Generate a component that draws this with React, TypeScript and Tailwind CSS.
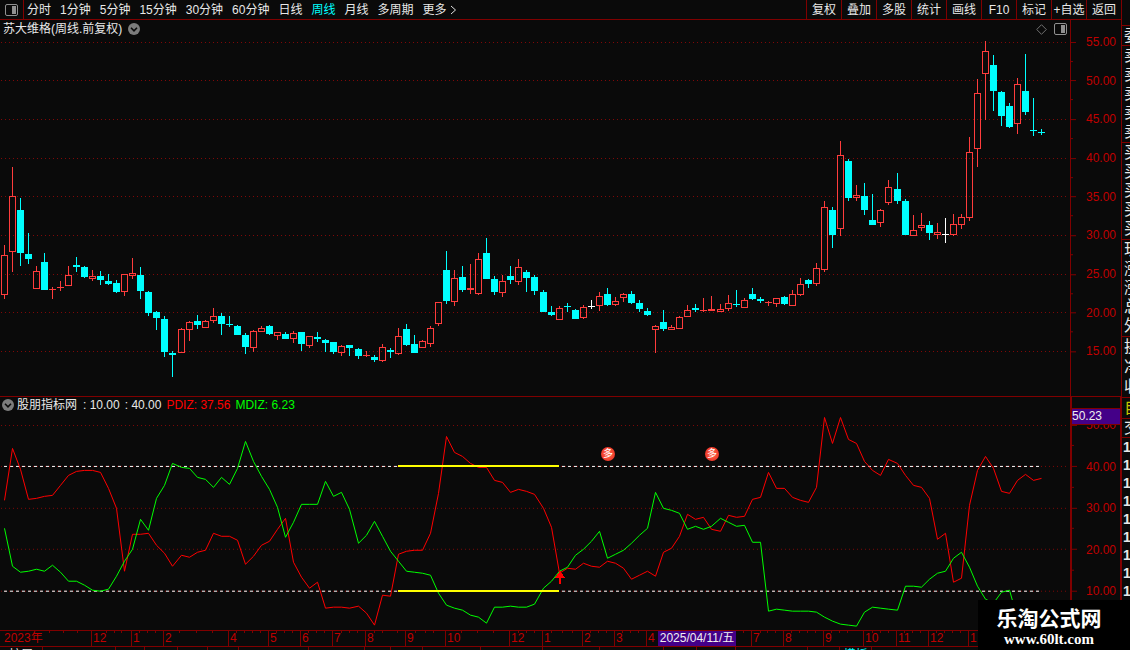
import React from "react";

type Kind = "u" | "d" | "w";
// kind, high, body top, body bottom, low
type Candle = [Kind, number, number, number, number];

const PLOT_W = 1070;
const MAIN_W = 1121;

const periods = [
  "分时", "1分钟", "5分钟", "15分钟", "30分钟", "60分钟", "日线", "周线", "月线", "多周期",
];
const tools = ["复权", "叠加", "多股", "统计", "画线", "F10", "标记", "+自选", "返回"];

const priceLabels = ["55.00", "50.00", "45.00", "40.00", "35.00", "30.00", "25.00", "20.00", "15.00"];
const priceRows = [42, 80, 119, 158, 196, 235, 274, 312, 351];
const indicatorLabels = ["50.00", "40.00", "30.00", "20.00", "10.00"];
const indicatorRows = [425, 466, 508, 549, 591];

const candles: Candle[] = [
  ["u", 245, 255, 295, 299], ["u", 167, 196, 252, 272], ["d", 198, 210, 253, 266], ["d", 233, 254, 259, 264],
  ["u", 266, 271, 289, 289], ["d", 253, 262, 290, 290], ["u", 287, 289, 290, 299], ["u", 281, 287, 288, 291],
  ["u", 266, 275, 286, 286], ["d", 257, 265, 267, 272], ["d", 266, 267, 277, 278], ["u", 270, 276, 279, 281],
  ["d", 271, 276, 280, 285], ["d", 274, 281, 284, 285], ["d", 280, 283, 292, 293], ["u", 274, 274, 292, 296],
  ["u", 258, 273, 276, 279], ["d", 267, 275, 291, 299], ["d", 291, 292, 313, 316], ["d", 311, 312, 318, 330],
  ["d", 316, 319, 352, 357], ["d", 351, 353, 355, 377], ["u", 328, 329, 353, 353], ["u", 321, 322, 330, 341],
  ["d", 315, 321, 325, 329], ["u", 320, 321, 328, 328], ["u", 308, 316, 321, 323], ["d", 313, 316, 324, 335],
  ["d", 316, 324, 325, 327], ["d", 325, 326, 335, 335], ["d", 333, 335, 347, 354], ["u", 330, 331, 348, 352],
  ["u", 326, 328, 332, 332], ["d", 325, 326, 334, 335], ["u", 332, 332, 336, 340], ["d", 332, 334, 339, 339],
  ["u", 331, 333, 339, 343], ["d", 332, 332, 344, 351], ["u", 336, 336, 346, 348], ["d", 332, 337, 339, 342],
  ["d", 339, 340, 343, 352], ["d", 342, 342, 352, 354], ["u", 345, 346, 353, 356], ["d", 345, 345, 348, 356],
  ["d", 348, 349, 356, 359], ["u", 351, 355, 356, 357], ["d", 355, 357, 360, 362], ["u", 344, 347, 361, 362],
  ["d", 348, 350, 352, 358], ["u", 328, 336, 354, 355], ["d", 324, 329, 345, 346], ["d", 335, 344, 353, 353],
  ["u", 340, 341, 348, 348], ["u", 326, 328, 344, 347], ["u", 302, 302, 324, 326], ["d", 251, 270, 301, 304],
  ["u", 270, 278, 302, 306], ["d", 266, 277, 290, 292], ["u", 264, 288, 290, 294], ["u", 253, 259, 294, 295],
  ["d", 238, 253, 279, 279], ["d", 276, 279, 292, 295], ["u", 275, 281, 293, 297], ["d", 266, 276, 280, 284],
  ["u", 259, 267, 282, 285], ["d", 270, 272, 278, 292], ["d", 275, 277, 291, 295], ["d", 290, 292, 312, 312],
  ["d", 306, 312, 315, 316], ["u", 306, 308, 320, 320], ["d", 303, 306, 307, 312], ["d", 309, 310, 319, 319],
  ["u", 305, 307, 318, 319], ["w", 300, 306, 307, 309], ["u", 292, 296, 306, 311], ["d", 288, 294, 305, 306],
  ["u", 297, 301, 305, 306], ["u", 293, 294, 298, 302], ["d", 291, 294, 303, 304], ["d", 300, 303, 309, 312],
  ["d", 308, 311, 315, 316], ["u", 325, 326, 330, 353], ["d", 310, 322, 329, 331], ["u", 325, 327, 330, 330],
  ["u", 316, 317, 329, 329], ["u", 305, 310, 317, 317], ["d", 304, 308, 310, 312], ["u", 298, 310, 311, 312],
  ["u", 296, 309, 311, 311], ["u", 304, 309, 312, 312], ["u", 295, 303, 309, 311], ["d", 290, 304, 305, 307],
  ["u", 298, 300, 308, 308], ["d", 288, 294, 299, 300], ["d", 297, 299, 301, 303], ["u", 301, 302, 303, 306],
  ["u", 298, 298, 304, 307], ["d", 296, 297, 304, 305], ["u", 290, 294, 306, 306], ["u", 278, 284, 295, 296],
  ["d", 279, 280, 284, 288], ["u", 263, 268, 284, 286], ["u", 201, 207, 270, 272], ["d", 207, 210, 235, 248],
  ["u", 141, 155, 229, 236], ["d", 159, 161, 198, 201], ["u", 185, 195, 198, 201], ["d", 183, 196, 210, 215],
  ["d", 194, 220, 225, 225], ["u", 209, 210, 223, 227], ["u", 180, 187, 203, 205], ["d", 173, 189, 201, 204],
  ["d", 199, 201, 235, 235], ["u", 215, 230, 236, 236], ["u", 213, 225, 228, 231], ["d", 221, 225, 233, 240],
  ["u", 223, 232, 235, 239], ["w", 218, 234, 235, 243], ["u", 214, 224, 235, 236], ["u", 214, 217, 225, 229],
  ["u", 137, 152, 218, 221], ["u", 79, 93, 149, 167], ["u", 41, 51, 74, 120], ["d", 55, 65, 91, 111],
  ["d", 91, 92, 116, 126], ["d", 103, 106, 127, 128], ["u", 78, 84, 124, 134], ["d", 54, 91, 112, 115],
  ["d", 98, 130, 131, 136], ["d", 129, 132, 133, 135],
];

const pdiz = [
  500, 448, 469, 499, 498, 496, 495, 485, 475, 471, 470, 470, 472, 488, 508, 571, 534, 534, 533, 545,
  553, 566, 555, 557, 552, 550, 533, 536, 536, 540, 564, 556, 545, 541, 529, 518, 562, 577, 588, 582,
  608, 607, 607, 608, 606, 613, 625, 595, 596, 554, 551, 550, 550, 533, 493, 436, 452, 456, 463, 467,
  467, 480, 482, 492, 489, 491, 494, 508, 527, 573, 568, 569, 563, 566, 567, 561, 563, 568, 579, 575,
  571, 576, 552, 548, 536, 514, 519, 517, 529, 531, 515, 517, 516, 499, 497, 472, 488, 488, 497, 500,
  502, 487, 417, 443, 417, 439, 443, 461, 470, 475, 459, 463, 475, 485, 487, 498, 539, 533, 582, 578,
  505, 470, 456, 468, 491, 493, 480, 474, 480, 478,
];

const mdiz = [
  528, 566, 572, 571, 569, 571, 565, 572, 581, 581, 585, 590, 591, 589, 576, 561, 549, 519, 530, 498,
  485, 463, 467, 468, 477, 479, 487, 477, 484, 468, 441, 461, 476, 489, 507, 537, 522, 504, 504, 504,
  481, 496, 492, 509, 543, 535, 521, 536, 551, 561, 571, 572, 573, 575, 593, 605, 608, 610, 615, 617,
  623, 607, 607, 606, 607, 607, 604, 588, 581, 571, 567, 555, 549, 541, 531, 558, 554, 550, 543, 535,
  528, 492, 508, 510, 513, 529, 526, 529, 526, 518, 522, 526, 525, 542, 542, 611, 609, 610, 611, 611,
  611, 612, 617, 621, 624, 625, 626, 612, 607, 608, 609, 610, 586, 586, 587, 579, 573, 571, 558, 552,
  567, 586, 599, 603, 592, 590, 618,
];

// left edge of every month on the date axis
const months: [string, number][] = [
  ["2023年", 0], ["12", 91], ["1", 131], ["2", 163], ["4", 228], ["5", 268], ["6", 300], ["7", 332],
  ["8", 365], ["9", 405], ["10", 445], ["12", 509], ["1", 542], ["2", 582], ["3", 614], ["4", 646],
  ["7", 751], ["8", 783], ["9", 823], ["10", 863], ["11", 896], ["12", 928], ["1", 968],
];

const weekTicks = [
  49, 63, 77, 106, 114, 121, 139, 147, 155, 179, 196, 212, 236, 244, 252, 260, 276, 284, 292, 308, 316, 324,
  341, 349, 357, 374, 382, 397, 415, 425, 433, 461, 477, 493, 518, 526, 534, 551, 562, 572, 590, 598, 606,
  622, 630, 638, 743, 760, 767, 775, 791, 799, 807, 815, 831, 839, 847, 872, 880, 888, 904, 912, 920, 936,
  944, 952, 960,
];

// right edges of the tab row that is scrolled out below the window
const tabEdges = [42, 115, 144, 177, 207, 238, 308, 364, 390, 422, 480, 542, 599, 663, 696, 735, 807, 839, 871];
const tabText: Record<number, string> = { 42: "扩展", 871: "模板" };

const quoteGroups = [
  { rows: ["委"], box: "h-5" },
  { rows: ["卖", "卖", "卖", "卖", "卖"], box: "h-[97px]" },
  { rows: ["买", "买", "买", "买", "买"], box: "h-[97px]" },
  { rows: ["现", "涨", "涨", "总", "外"], box: "h-[97px]" },
  { rows: ["换", "净", "收"], box: "h-[61px]" },
  { rows: ["自"], box: "h-[21px] text-[#c8c800]" },
  { rows: ["交"], box: "h-[19px]" },
];

const candleX = (i: number) => 4 + Math.floor(i * 8.0449 + 0.03);
const linePoints = (ys: number[]) => ys.map((y, i) => `${candleX(i)},${y}`).join(" ");
const colors = { u: "#ff3c3c", d: "#00ffff", w: "#ffffff" };

function PanelIcon() {
  return (
    <svg className="h-3 w-[13px] shrink-0" viewBox="0 0 13 12" aria-hidden="true">
      <rect x="0.5" y="0.5" width="12" height="11" rx="1.5" fill="none" stroke="#909090" />
      <rect x="7" y="2" width="4" height="8" fill="#909090" />
    </svg>
  );
}

function RoundChevron() {
  return (
    <svg className="h-3 w-3" viewBox="0 0 12 12" aria-hidden="true">
      <circle cx="6" cy="6" r="6" fill="#7c7c7c" />
      <path d="M3 4.8 6 7.8 9 4.8" fill="none" stroke="#0a0a0a" strokeWidth="1.6" />
    </svg>
  );
}

function CandleShape({ candle, x }: { candle: Candle; x: number }) {
  const [kind, high, top, bottom, low] = candle;
  const color = colors[kind];
  const hollow = kind === "u" && bottom - top > 2;
  return (
    <g fill={color}>
      {top > high && <rect x={x} y={high} width="1" height={top - high} />}
      {low > bottom && <rect x={x} y={bottom} width="1" height={low - bottom} />}
      {hollow ? (
        <rect x={x - 2.5} y={top + 0.5} width="6" height={bottom - top - 1} fill="none" stroke={color} />
      ) : (
        <rect x={x - 3} y={top} width="7" height={bottom - top} />
      )}
    </g>
  );
}

function GridRows({ rows }: { rows: number[] }) {
  return (
    <g stroke="#800808" strokeDasharray="1 3">
      {rows.map((y) => (
        <line key={y} x1="1" x2="1067" y1={y + 0.5} y2={y + 0.5} />
      ))}
    </g>
  );
}

function AxisTicks({ rows, viewBox }: { rows: number[]; viewBox: string }) {
  return (
    <svg className="absolute inset-y-0 left-0 h-full w-[5px]" viewBox={viewBox} preserveAspectRatio="none" aria-hidden="true">
      <g fill="#800000">
        {rows.map((y, i) => (
          <React.Fragment key={y}>
            <rect x="0" y={y} width="5" height="1" />
            {i < rows.length - 1 && <rect x="0" y={Math.floor((y + rows[i + 1]) / 2)} width="2" height="1" />}
          </React.Fragment>
        ))}
      </g>
    </svg>
  );
}

function Toolbar() {
  return (
    <header className="flex h-5 shrink-0 items-stretch border-b border-[#800000]">
      <button className="flex w-6 shrink-0 items-center border-r border-[#800000] pl-[5px]" aria-label="侧栏">
        <PanelIcon />
      </button>
      <nav className="flex min-w-0 flex-1 items-center gap-[9px] overflow-hidden pl-[3px]">
        {periods.map((p) => (
          <button key={p} className={p === "周线" ? "shrink-0 text-[#00ffff]" : "shrink-0"}>
            {p}
          </button>
        ))}
        <button className="flex shrink-0 items-center gap-[3px]">
          更多
          <svg className="h-[10px] w-[7px]" viewBox="0 0 7 10" aria-hidden="true">
            <path d="M1 1 5.5 5 1 9" fill="none" stroke="#e0e0e0" />
          </svg>
        </button>
      </nav>
      <div className="flex shrink-0">
        {tools.map((t) => (
          <button key={t} className="w-[35px] border-l border-[#800000] text-center whitespace-nowrap">
            {t}
          </button>
        ))}
      </div>
    </header>
  );
}

function PriceChart() {
  return (
    <section className="flex min-h-0 flex-[377] border-b border-[#800000]">
      <div className="flex min-w-0 flex-1 flex-col">
        <div className="flex h-[18px] shrink-0 items-center pr-[3px] pl-[3px]">
          <h1>苏大维格(周线.前复权)</h1>
          <button className="ml-[6px]" aria-label="展开">
            <RoundChevron />
          </button>
          <div className="ml-auto flex items-center gap-[7px]">
            <svg className="h-[11px] w-[11px]" viewBox="0 0 11 11" aria-hidden="true">
              <path d="M5.5.7 10.3 5.5 5.5 10.3.7 5.5Z" fill="none" stroke="#707070" />
            </svg>
            <PanelIcon />
          </div>
        </div>
        <svg
          className="block min-h-0 w-full flex-1"
          viewBox="0 38 1070 358"
          preserveAspectRatio="none"
          shapeRendering="crispEdges"
          role="img"
          aria-label="周线K线图"
        >
          <GridRows rows={priceRows} />
          {candles.map((c, i) => (
            <CandleShape key={i} candle={c} x={candleX(i)} />
          ))}
        </svg>
      </div>
      <div className="relative flex w-[51px] shrink-0 flex-col justify-between border-l border-[#800000] pt-[14px] pr-[5px] pb-[37px] text-right leading-4 text-[#c00000]">
        <AxisTicks rows={priceRows} viewBox="0 20 5 376" />
        {priceLabels.map((l) => (
          <span key={l}>{l}</span>
        ))}
      </div>
    </section>
  );
}

function IndicatorChart() {
  return (
    <section className="flex min-h-0 flex-[233]">
      <div className="flex min-w-0 flex-1 flex-col">
        <div className="flex h-4 shrink-0 items-center pl-[2px] whitespace-pre">
          <button aria-label="指标菜单">
            <RoundChevron />
          </button>
          <span className="ml-[3px]">股朋指标网</span>
          <span className="ml-[6px]">: 10.00</span>
          <span className="ml-[5px]">: 40.00</span>
          <span className="ml-[5px] text-[#ff0000]">PDIZ: 37.56</span>
          <span className="ml-[5px] text-[#00ff00]">MDIZ: 6.23</span>
        </div>
        <div className="relative min-h-0 flex-1">
          <svg
            className="absolute inset-0 h-full w-full"
            viewBox="0 413 1070 217"
            preserveAspectRatio="none"
            shapeRendering="crispEdges"
            role="img"
            aria-label="PDIZ 与 MDIZ 指标线"
          >
            <GridRows rows={indicatorRows} />
            <g stroke="#ffffff" strokeDasharray="3 3">
              <line x1="4" x2="1040" y1="466.5" y2="466.5" />
              <line x1="4" x2="1040" y1="591.5" y2="591.5" />
            </g>
            <g fill="none" transform="translate(0.5 0.5)">
              <polyline points={linePoints(pdiz)} stroke="#ff0000" />
              <polyline points={linePoints(mdiz)} stroke="#00ff00" />
            </g>
            <g fill="#ffff00">
              <rect x="398" y="465" width="161" height="2" />
              <rect x="398" y="590" width="161" height="2" />
            </g>
            <path d="M560 571 565 578H561V584H559V578H555Z" fill="#ff0000" />
          </svg>
          {[608, 712].map((x) => (
            <span
              key={x}
              className="absolute top-[34px] flex h-[14px] w-[14px] -translate-x-1/2 items-center justify-center rounded-full bg-radial from-[#ff6a50] to-[#e81010] text-[10px] leading-none text-white"
              style={{ left: `${(x / PLOT_W) * 100}%` }}
            >
              多
            </span>
          ))}
        </div>
      </div>
      <div className="relative flex w-[51px] shrink-0 flex-col justify-between border-r border-l-2 border-[#800000] pt-5 pr-1 pb-[31px] text-right leading-4 text-[#c00000]">
        <AxisTicks rows={indicatorRows} viewBox="0 397 5 233" />
        {indicatorLabels.map((l) => (
          <span key={l}>{l}</span>
        ))}
        <span className="absolute top-[11px] right-0 left-0 h-[17px] border-y border-[#800000] bg-[#440088] text-left leading-[15px] text-[#f0f0f0]">
          50.23
        </span>
      </div>
    </section>
  );
}

function DateAxis() {
  return (
    <div className="relative flex h-[17px] shrink-0 border-y border-[#800000] pr-[51px] leading-[15px] text-[#c00000]">
      <div className="relative flex min-w-0 flex-1">
        {months.map(([label, x], i) => {
          const next = i < months.length - 1 ? months[i + 1][1] : PLOT_W;
          return (
            <span
              key={x}
              className={i === 0 ? "shrink-0 pl-1" : "shrink-0 border-l border-[#800000] pl-[1px]"}
              style={{ width: `${((next - x) / PLOT_W) * 100}%` }}
            >
              {label}
            </span>
          );
        })}
        <svg className="absolute inset-x-0 top-0 h-[2px] w-full" viewBox="0 0 1070 2" preserveAspectRatio="none" aria-hidden="true">
          {weekTicks.map((x) => (
            <rect key={x} x={x} y="0" width="1" height="2" fill="#800000" />
          ))}
        </svg>
        <span
          className="absolute inset-y-0 w-[78px] bg-[#440088] text-center whitespace-nowrap text-[#f0f0f0]"
          style={{ left: `${(658 / PLOT_W) * 100}%` }}
        >
          2025/04/11/五
        </span>
      </div>
    </div>
  );
}

function TabRow() {
  return (
    <div className="flex h-[3px] shrink-0 overflow-hidden leading-[14px]">
      {tabEdges.map((x, i) => {
        const start = i === 0 ? 0 : tabEdges[i - 1] + 1;
        return (
          <button
            key={x}
            className={
              x === 871
                ? "h-4 shrink-0 border-r border-[#800000] text-[#00ffff]"
                : "h-4 shrink-0 border-r border-[#800000]"
            }
            style={{ width: `${((x + 1 - start) / MAIN_W) * 100}%` }}
            aria-label={`标签 ${i + 1}`}
          >
            {tabText[x]}
          </button>
        );
      })}
    </div>
  );
}

function QuoteStrip() {
  return (
    <aside className="flex w-[9px] shrink-0 flex-col overflow-hidden border-l border-[#800000]">
      <div className="h-[26px] shrink-0 border-b border-[#800000]" />
      {quoteGroups.map((g, i) => (
        <div key={i} className={`flex shrink-0 flex-col justify-around border-b border-[#800000] pl-[2px] text-base leading-[18px] ${g.box}`}>
          {g.rows.map((r, n) => (
            <span key={n}>{r}</span>
          ))}
        </div>
      ))}
      <div className="flex flex-col pl-[1px] text-sm leading-[18px] font-bold">
        {Array.from({ length: 9 }, (_, i) => (
          <span key={i}>1</span>
        ))}
      </div>
    </aside>
  );
}

export default function App() {
  return (
    <div className="relative flex h-screen min-h-[480px] overflow-hidden bg-[#0a0a0a] font-['Liberation_Sans','Noto_Sans_CJK_SC',sans-serif] text-[12px] leading-4 text-[#e8e8e8]">
      <main className="flex min-w-0 flex-1 flex-col">
        <Toolbar />
        <PriceChart />
        <IndicatorChart />
        <DateAxis />
        <TabRow />
      </main>
      <QuoteStrip />

      {/* Site mark */}
      <div className="absolute right-0 bottom-0 flex h-[50px] w-[152px] flex-col items-center bg-black pt-[6px] pr-[10px] text-white">
        <strong className="text-[21px] leading-[25px] font-bold">乐淘公式网</strong>
        <a
          href="#"
          className="font-['Liberation_Serif',serif] text-[15px] leading-4 font-bold"
        >
          www.60lt.com
        </a>
      </div>
    </div>
  );
}
